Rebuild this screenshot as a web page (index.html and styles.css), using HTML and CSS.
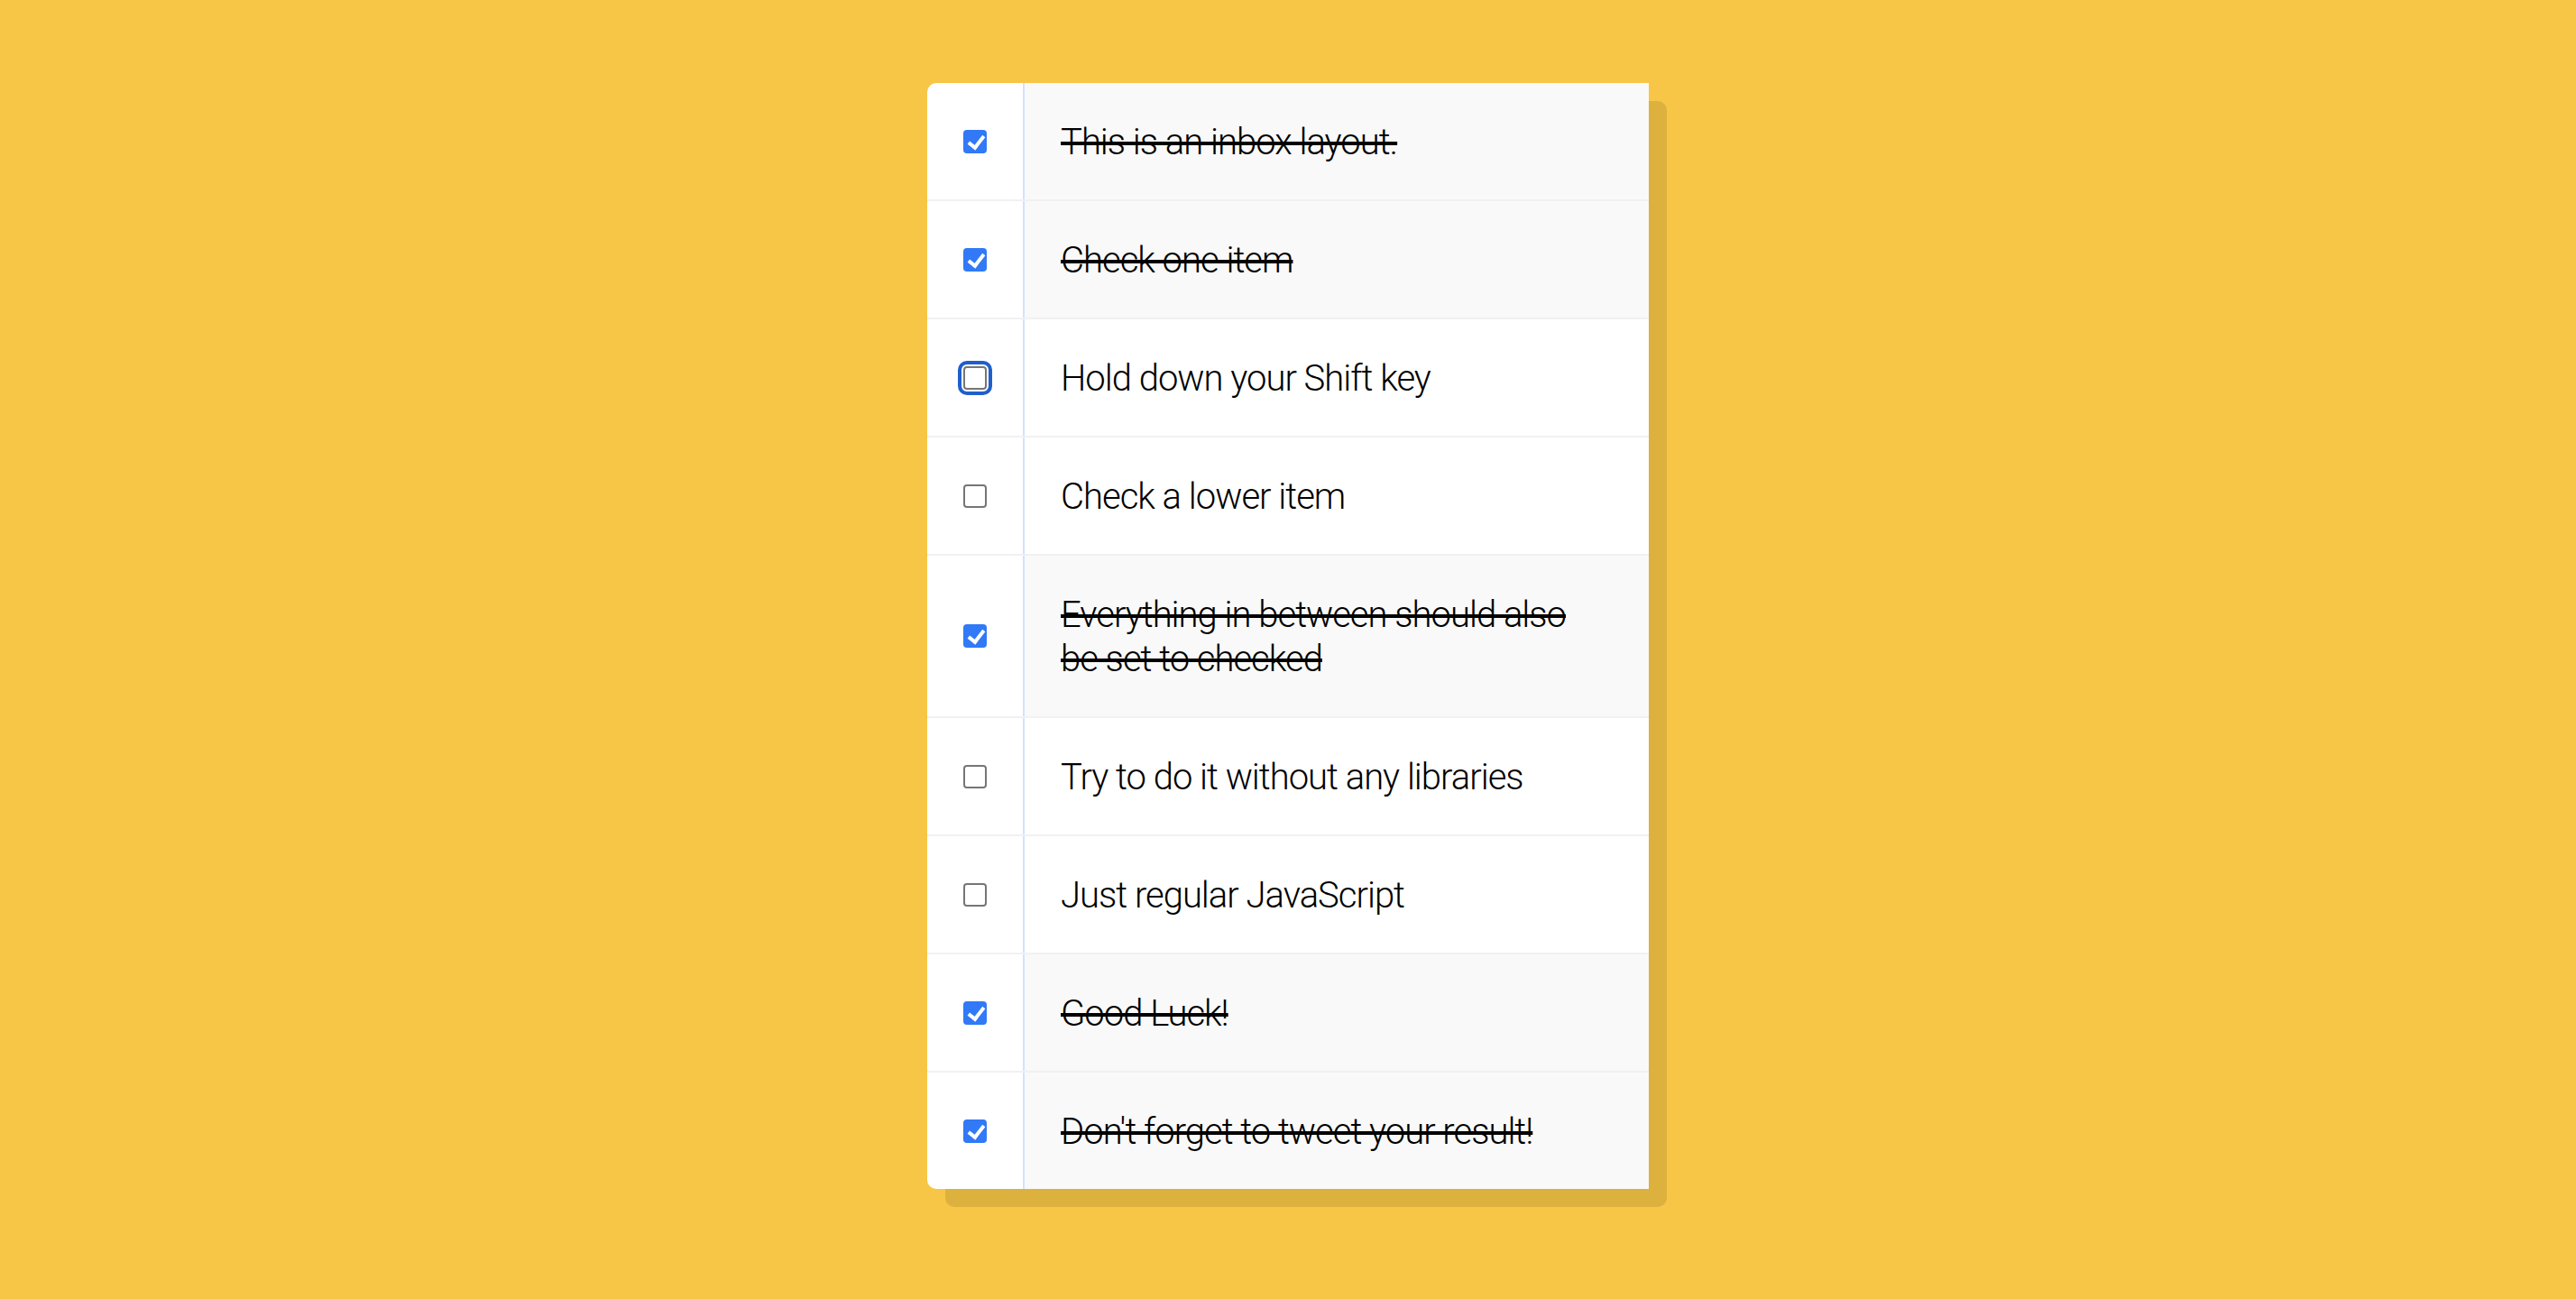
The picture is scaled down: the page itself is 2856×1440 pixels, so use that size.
FILE: index.html
```html
<!DOCTYPE html>
<html lang="en">
<head>
<meta charset="utf-8">
<title>Hold Shift to Check Multiple Checkboxes</title>
<link rel="stylesheet" href="styles.css">
</head>
<body>
<div class="inbox">
  <div class="item"><input type="checkbox" checked><p>This is an inbox layout.</p></div>
  <div class="item"><input type="checkbox" checked><p>Check one item</p></div>
  <div class="item"><input type="checkbox" class="focused"><p>Hold down your Shift key</p></div>
  <div class="item"><input type="checkbox"><p>Check a lower item</p></div>
  <div class="item"><input type="checkbox" checked><p>Everything in between should also<br>be set to checked</p></div>
  <div class="item"><input type="checkbox"><p>Try to do it without any libraries</p></div>
  <div class="item"><input type="checkbox"><p>Just regular JavaScript</p></div>
  <div class="item"><input type="checkbox" checked><p>Good Luck!</p></div>
  <div class="item"><input type="checkbox" checked><p>Don't forget to tweet your result!</p></div>
</div>
</body>
</html>
```
FILE: styles.css
```css
html {
  background: #f7c646;
}

body {
  margin: 0;
  padding-top: 92px;
  padding-bottom: 122px;
  font-family: Roboto, "Liberation Sans", sans-serif;
}

.inbox {
  width: 800px;
  margin: 0 auto;
  background: #ffffff;
  border-radius: 10px;
  box-shadow: 20px 20px 0 rgba(0, 0, 0, 0.1);
}

.item {
  display: flex;
  align-items: center;
  border-bottom: 2px solid #f1f1f1;
}

.item:last-child {
  border-bottom: 0;
}

input[type="checkbox"] {
  -webkit-appearance: none;
  appearance: none;
  position: relative;
  flex: none;
  width: 26px;
  height: 26px;
  margin: 40px;
  box-sizing: border-box;
  border: 2px solid #767676;
  border-radius: 4px;
  background: #ffffff;
}

input[type="checkbox"].focused {
  outline: 4px solid #1f5fcc;
  outline-offset: 2px;
  border-radius: 4px;
}

input[type="checkbox"]:checked {
  border: 0;
  background: #3179f6;
}

input[type="checkbox"]:checked::after {
  content: "";
  position: absolute;
  left: 9px;
  top: 3px;
  width: 7px;
  height: 14px;
  border-right: 4px solid #ffffff;
  border-bottom: 4px solid #ffffff;
  transform: rotate(38deg);
}

p {
  margin: 0;
  padding: 41px 40px 39px;
  flex: 1;
  font-size: 40px;
  line-height: 49px;
  font-weight: 300;
  letter-spacing: -1px;
  color: #000000;
  border-left: 2px solid #d1e2ff;
}

input:checked + p {
  background: #f9f9f9;
  text-decoration: line-through;
  text-decoration-thickness: 4px;
}
```
